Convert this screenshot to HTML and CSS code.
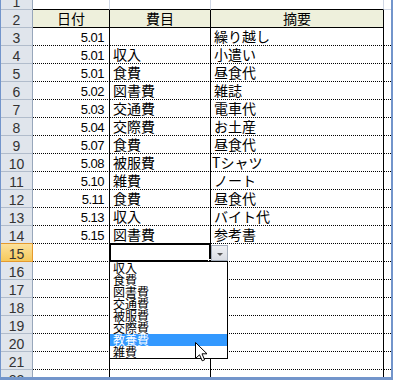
FILE: index.html
```html
<!DOCTYPE html>
<html lang="ja">
<head>
<meta charset="utf-8">
<title>Sheet</title>
<link rel="stylesheet" href="styles.css">
</head>
<body>
<div class="win">
  <div class="sheet">
    <div class="rh r1">1</div><div class="c g1"></div><div class="c g1"></div><div class="c g1"></div><div class="d g1d"></div>
    <div class="rh">2</div><div class="c hd jp">日付</div><div class="c hd jp">費目</div><div class="c hd jp">摘要</div><div class="d hdd"></div>
    <div class="rh">3</div><div class="c num">5.01</div><div class="c jp"></div><div class="c jp">繰り越し</div><div class="d"></div>
    <div class="rh">4</div><div class="c num">5.01</div><div class="c jp">収入</div><div class="c jp">小遣い</div><div class="d"></div>
    <div class="rh">5</div><div class="c num">5.01</div><div class="c jp">食費</div><div class="c jp">昼食代</div><div class="d"></div>
    <div class="rh">6</div><div class="c num">5.02</div><div class="c jp">図書費</div><div class="c jp">雑誌</div><div class="d"></div>
    <div class="rh">7</div><div class="c num">5.03</div><div class="c jp">交通費</div><div class="c jp">電車代</div><div class="d"></div>
    <div class="rh">8</div><div class="c num">5.04</div><div class="c jp">交際費</div><div class="c jp">お土産</div><div class="d"></div>
    <div class="rh">9</div><div class="c num">5.07</div><div class="c jp">食費</div><div class="c jp">昼食代</div><div class="d"></div>
    <div class="rh">10</div><div class="c num">5.08</div><div class="c jp">被服費</div><div class="c jp tight">Tシャツ</div><div class="d"></div>
    <div class="rh">11</div><div class="c num">5.10</div><div class="c jp">雑費</div><div class="c jp">ノート</div><div class="d"></div>
    <div class="rh">12</div><div class="c num">5.11</div><div class="c jp">食費</div><div class="c jp">昼食代</div><div class="d"></div>
    <div class="rh">13</div><div class="c num">5.13</div><div class="c jp">収入</div><div class="c jp">バイト代</div><div class="d"></div>
    <div class="rh pre">14</div><div class="c num">5.15</div><div class="c jp">図書費</div><div class="c jp">参考書</div><div class="d"></div>
    <div class="rh act">15</div><div class="c"></div><div class="c"></div><div class="c"></div><div class="d"></div>
    <div class="rh">16</div><div class="c"></div><div class="c"></div><div class="c"></div><div class="d"></div>
    <div class="rh">17</div><div class="c"></div><div class="c"></div><div class="c"></div><div class="d"></div>
    <div class="rh">18</div><div class="c"></div><div class="c"></div><div class="c"></div><div class="d"></div>
    <div class="rh">19</div><div class="c"></div><div class="c"></div><div class="c"></div><div class="d"></div>
    <div class="rh">20</div><div class="c"></div><div class="c"></div><div class="c"></div><div class="d"></div>
    <div class="rh">21</div><div class="c"></div><div class="c"></div><div class="c"></div><div class="d"></div>
    <div class="rh">22</div><div class="c"></div><div class="c"></div><div class="c"></div><div class="d"></div>
  </div>

  <div class="sel"><span class="handle"></span></div>
  <div class="ddbtn"><span class="tri"></span></div>
  <ul class="list">
    <li>収入</li>
    <li>食費</li>
    <li>図書費</li>
    <li>交通費</li>
    <li>被服費</li>
    <li>交際費</li>
    <li class="hl">教養費</li>
    <li>雑費</li>
  </ul>
  <svg class="cursor" width="13" height="20" viewBox="0 0 13 20">
    <path d="M0.5 0.5 L0.5 16.5 L4.5 12.8 L7.2 18.8 L9.6 17.8 L7 11.8 L12 11.8 Z" fill="#fff" stroke="#000" stroke-width="1" stroke-linejoin="miter"/>
  </svg>
</div>
</body>
</html>
```

FILE: styles.css
```css
* {
  box-sizing: border-box;
  margin: 0;
  padding: 0;
}

html, body {
  width: 393px;
  height: 380px;
  overflow: hidden;
  background: #fff;
}

body {
  font-family: "Liberation Sans", "Noto Sans CJK JP", sans-serif;
  color: #000;
}

.win {
  position: relative;
  width: 393px;
  height: 380px;
  border-left: 1px solid #7395cb;
  border-right: 2px solid #7395cb;
  border-bottom: 3px solid #7395cb;
  overflow: hidden;
}

.sheet {
  display: grid;
  grid-template-columns: 32px 77px 101px 173px 7px;
  grid-template-rows: 10px repeat(21, 18px);
}

.rh {
  background: #e0e5ec;
  border-right: 1px solid #98a7bb;
  border-bottom: 1px solid #b1bccb;
  text-align: center;
  font-size: 14px;
  line-height: 15px;
  padding-top: 3px;
  color: #333;
}

.rh.r1 {
  padding-top: 0;
  line-height: 4px;
  overflow: hidden;
}

.rh.pre {
  border-bottom-color: #e59a2e;
}

.rh.act {
  background: linear-gradient(#fbe19c, #f6c95a);
  border-bottom-color: #e59a2e;
  border-right-color: #e59a2e;
}

.c {
  border-right: 1px solid #000;
  border-bottom: 1px dotted #000;
  font-size: 14px;
  line-height: 17px;
  white-space: nowrap;
}

.d {
  border-bottom: 1px dotted #000;
}

.g1 {
  border-right-color: #d0d7e5;
  border-bottom: 1px solid #000;
}

.g1d {
  border-bottom: 1px solid #d0d7e5;
}

.hd {
  background: #eef0dc;
  border-bottom: 1px solid #000;
  text-align: center;
}

.hdd {
  border-bottom: none;
}

.jp {
  font-family: "Noto Sans CJK JP", sans-serif;
  padding-left: 3px;
}

.hd.jp {
  padding-left: 0;
}

.tight {
  padding-left: 1px;
}

.num {
  text-align: right;
  padding-right: 5px;
  padding-top: 1px;
  font-size: 13px;
  letter-spacing: -0.5px;
}

.sel {
  position: absolute;
  left: 108px;
  top: 243px;
  width: 102px;
  height: 19px;
  border: 2px solid #000;
}

.handle {
  position: absolute;
  right: -4px;
  bottom: -4px;
  width: 5px;
  height: 5px;
  background: #000;
  border: 1px solid #fff;
}

.ddbtn {
  position: absolute;
  left: 210px;
  top: 245px;
  width: 17px;
  height: 16px;
  background: linear-gradient(#eef0f4, #d9dde4);
  border: 1px solid #a3acb9;
  display: flex;
  align-items: center;
  justify-content: center;
  padding-top: 2px;
  padding-left: 1px;
}

.tri {
  width: 0;
  height: 0;
  border-left: 3px solid transparent;
  border-right: 3px solid transparent;
  border-top: 3px solid #555;
}

.list {
  position: absolute;
  left: 108px;
  top: 261px;
  width: 119px;
  height: 98px;
  background: #fff;
  border: 1px solid #000;
  list-style: none;
  font-family: "Noto Sans CJK JP", sans-serif;
  font-size: 12px;
  line-height: 12px;
}

.list li {
  height: 12px;
  padding-left: 3px;
  white-space: nowrap;
}

.list li.hl {
  background: #3399ff;
  color: #fff;
}

.cursor {
  position: absolute;
  left: 194px;
  top: 342px;
}
```
